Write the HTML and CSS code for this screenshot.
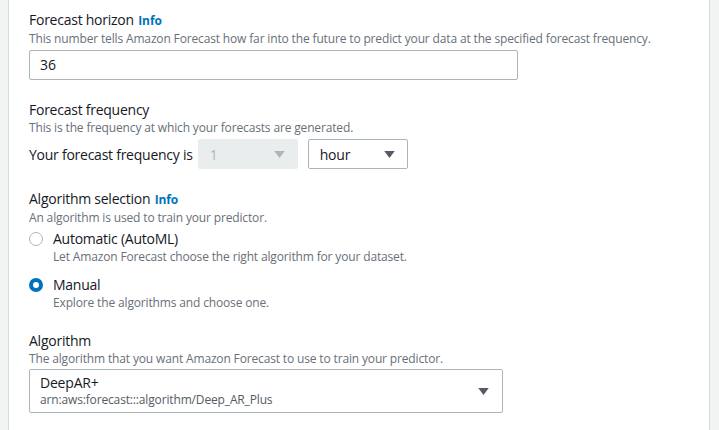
FILE: index.html
```html
<!DOCTYPE html>
<html>
<head>
<meta charset="utf-8">
<link rel="stylesheet" href="styles.css">
</head>
<body>
<div class="panel">
  <div class="field first">
    <div class="label">Forecast horizon <a class="info">Info</a></div>
    <div class="desc">This number tells Amazon Forecast how far into the future to predict your data at the specified forecast frequency.</div>
    <div class="input">36</div>
  </div>

  <div class="field">
    <div class="label">Forecast frequency</div>
    <div class="desc">This is the frequency at which your forecasts are generated.</div>
    <div class="freq-row">
      <span class="freq-text">Your forecast frequency is</span>
      <div class="select disabled">
        <span>1</span>
        <svg class="caret" viewBox="0 0 12 8" width="12" height="8"><path d="M0 0H12L6 8Z"/></svg>
      </div>
      <div class="select unit">
        <span>hour</span>
        <svg class="caret" viewBox="0 0 12 8" width="12" height="8"><path d="M0 0H12L6 8Z"/></svg>
      </div>
    </div>
  </div>

  <div class="field">
    <div class="label">Algorithm selection <a class="info">Info</a></div>
    <div class="desc">An algorithm is used to train your predictor.</div>
    <div class="radios">
      <div class="radio">
        <span class="dot"></span>
        <div class="radio-body">
          <div class="radio-label">Automatic (AutoML)</div>
          <div class="desc">Let Amazon Forecast choose the right algorithm for your dataset.</div>
        </div>
      </div>
      <div class="radio">
        <span class="dot checked"></span>
        <div class="radio-body">
          <div class="radio-label">Manual</div>
          <div class="desc">Explore the algorithms and choose one.</div>
        </div>
      </div>
    </div>
  </div>

  <div class="field">
    <div class="label">Algorithm</div>
    <div class="desc">The algorithm that you want Amazon Forecast to use to train your predictor.</div>
    <div class="select algo">
      <div class="algo-text">
        <div class="algo-name">DeepAR+</div>
        <div class="algo-arn">arn:aws:forecast:::algorithm/Deep_AR_Plus</div>
      </div>
      <svg class="caret" viewBox="0 0 12 8" width="12" height="8"><path d="M0 0H12L6 8Z"/></svg>
    </div>
  </div>
</div>
</body>
</html>
```

FILE: styles.css
```css
html, body {
  margin: 0;
  padding: 0;
}
body {
  background: #f2f3f3;
  font-family: "Open Sans", "Noto Sans", sans-serif;
  color: #16191f;
  width: 719px;
  height: 430px;
  overflow: hidden;
}
.panel {
  margin: 0 9px 0 8px;
  height: 430px;
  box-sizing: border-box;
  background: #fff;
  border-left: 1px solid #d5dbdb;
  border-right: 1px solid #d5dbdb;
  padding: 10px 20px 0 20px;
}
.field {
  margin-top: 20px;
}
.field.first {
  margin-top: 0;
}
.label {
  font-size: 14px;
  line-height: 20px;
  letter-spacing: -0.25px;
  color: #16191f;
}
.info {
  font-size: 12px;
  font-weight: 700;
  letter-spacing: -0.1px;
  color: #0073bb;
  margin-left: 1px;
}
.desc {
  font-size: 12px;
  line-height: 16px;
  letter-spacing: -0.15px;
  color: #687078;
}
.input {
  margin-top: 3px;
  width: 489px;
  height: 30px;
  box-sizing: border-box;
  border: 1px solid #aab7b8;
  border-radius: 2px;
  padding: 0 10px;
  font-size: 14px;
  line-height: 28px;
}
.freq-row {
  margin-top: 3px;
  display: flex;
  align-items: center;
  height: 30px;
}
.freq-text {
  font-size: 14px;
  letter-spacing: -0.25px;
  margin-right: 5px;
}
.select {
  box-sizing: border-box;
  display: flex;
  align-items: center;
  justify-content: space-between;
  border: 1px solid #aab7b8;
  border-radius: 2px;
  font-size: 14px;
  letter-spacing: -0.2px;
  padding: 0 12px 0 11px;
}
.select.disabled {
  width: 100px;
  height: 30px;
  background: #eaeded;
  border-color: #eaeded;
  color: #aab7b8;
}
.select.disabled .caret {
  fill: #aab7b8;
}
.select.unit {
  width: 100px;
  height: 30px;
  margin-left: 10px;
}
.caret {
  fill: #545b64;
  width: 11px;
  height: 7px;
}
.radios {
  margin-top: 3px;
  display: flex;
  flex-direction: column;
  gap: 10px;
}
.radio {
  display: flex;
  align-items: flex-start;
}
.dot {
  width: 14px;
  height: 14px;
  box-sizing: border-box;
  border: 1px solid #aab7b8;
  border-radius: 50%;
  margin-top: 3px;
  margin-right: 10px;
  flex: none;
}
.dot.checked {
  border: 4px solid #0073bb;
}
.radio-label {
  font-size: 14px;
  line-height: 20px;
  letter-spacing: -0.25px;
}
.select.algo {
  margin-top: 2px;
  width: 474px;
  height: 44px;
  padding: 0 13px 0 10px;
}
.algo-name {
  font-size: 14px;
  line-height: 18px;
}
.algo-arn {
  font-size: 12px;
  line-height: 16px;
  letter-spacing: -0.15px;
  color: #545b64;
}
```
